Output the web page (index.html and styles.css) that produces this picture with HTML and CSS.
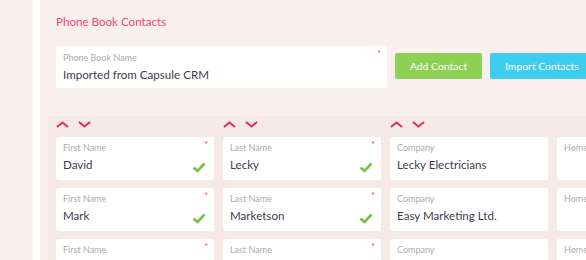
FILE: index.html
```html
<!DOCTYPE html>
<html>
<head>
<meta charset="utf-8">
<link rel="stylesheet" href="styles.css">
</head>
<body>
<div class="sidebar"></div>
<div class="divider"></div>
<main class="main">
  <h1 class="title">Phone Book Contacts</h1>
  <div class="top-row">
    <div class="field wide">
      <span class="label">Phone Book Name</span>
      <span class="value">Imported from Capsule CRM</span>
      <span class="req">*</span>
    </div>
    <button class="btn green">Add Contact</button>
    <button class="btn cyan">Import Contacts</button>
  </div>
  <section class="table">
    <div class="grid">
      <div class="sort"><svg width="13" height="7" viewBox="0 0 13 7"><path d="M1 6 L6.5 1.5 L12 6" fill="none" stroke="#e8294f" stroke-width="2"/></svg><svg width="13" height="7" viewBox="0 0 13 7"><path d="M1 1 L6.5 5.5 L12 1" fill="none" stroke="#e8294f" stroke-width="2"/></svg></div>
      <div class="sort"><svg width="13" height="7" viewBox="0 0 13 7"><path d="M1 6 L6.5 1.5 L12 6" fill="none" stroke="#e8294f" stroke-width="2"/></svg><svg width="13" height="7" viewBox="0 0 13 7"><path d="M1 1 L6.5 5.5 L12 1" fill="none" stroke="#e8294f" stroke-width="2"/></svg></div>
      <div class="sort"><svg width="13" height="7" viewBox="0 0 13 7"><path d="M1 6 L6.5 1.5 L12 6" fill="none" stroke="#e8294f" stroke-width="2"/></svg><svg width="13" height="7" viewBox="0 0 13 7"><path d="M1 1 L6.5 5.5 L12 1" fill="none" stroke="#e8294f" stroke-width="2"/></svg></div>
      <div class="sort"></div>

      <div class="field"><span class="label">First Name</span><span class="value">David</span><span class="req">*</span><svg class="check" width="14" height="11" viewBox="0 0 14 11"><path d="M1.5 5.5 L5.5 9 L12.5 1.5" fill="none" stroke="#76c143" stroke-width="2.6"/></svg></div>
      <div class="field"><span class="label">Last Name</span><span class="value">Lecky</span><span class="req">*</span><svg class="check" width="14" height="11" viewBox="0 0 14 11"><path d="M1.5 5.5 L5.5 9 L12.5 1.5" fill="none" stroke="#76c143" stroke-width="2.6"/></svg></div>
      <div class="field"><span class="label">Company</span><span class="value">Lecky Electricians</span></div>
      <div class="field"><span class="label">Home Phone</span><span class="value"></span></div>

      <div class="field"><span class="label">First Name</span><span class="value">Mark</span><span class="req">*</span><svg class="check" width="14" height="11" viewBox="0 0 14 11"><path d="M1.5 5.5 L5.5 9 L12.5 1.5" fill="none" stroke="#76c143" stroke-width="2.6"/></svg></div>
      <div class="field"><span class="label">Last Name</span><span class="value">Marketson</span><span class="req">*</span><svg class="check" width="14" height="11" viewBox="0 0 14 11"><path d="M1.5 5.5 L5.5 9 L12.5 1.5" fill="none" stroke="#76c143" stroke-width="2.6"/></svg></div>
      <div class="field"><span class="label">Company</span><span class="value">Easy Marketing Ltd.</span></div>
      <div class="field"><span class="label">Home Phone</span><span class="value"></span></div>

      <div class="field"><span class="label">First Name</span><span class="value"></span><span class="req">*</span></div>
      <div class="field"><span class="label">Last Name</span><span class="value"></span><span class="req">*</span></div>
      <div class="field"><span class="label">Company</span><span class="value"></span></div>
      <div class="field"><span class="label">Home Phone</span><span class="value"></span></div>
    </div>
  </section>
</main>
</body>
</html>
```
FILE: styles.css
```css
html, body {
  margin: 0;
  padding: 0;
  width: 586px;
  height: 260px;
  overflow: hidden;
}
body {
  display: flex;
  background: #f9efee;
  font-family: Lato, "Open Sans", sans-serif;
}
.sidebar {
  flex: 0 0 33px;
  background: #f9efee;
}
.divider {
  flex: 0 0 7px;
  background: #ffffff;
}
.main {
  flex: 1 0 auto;
  padding: 14px 0 0 16px;
  background: #f9efee;
}
.title {
  margin: 0;
  font-size: 11.6px;
  font-weight: 400;
  line-height: 16px;
  color: #f04a71;
}
.top-row {
  display: flex;
  align-items: flex-start;
  gap: 8px;
  margin-top: 16px;
}
.field {
  position: relative;
  box-sizing: border-box;
  background: #ffffff;
  border-radius: 3px;
  padding: 5px 7px 0;
  height: 43px;
  display: flex;
  flex-direction: column;
}
.field.wide {
  width: 331px;
  height: 42px;
  padding-top: 6px;
}
.label {
  font-size: 9px;
  line-height: 12px;
  color: #b3aaaa;
  white-space: nowrap;
}
.value {
  font-size: 11.6px;
  line-height: 16px;
  margin-top: 3px;
  color: #403c4d;
  white-space: nowrap;
}
.req {
  position: absolute;
  top: 3px;
  right: 6px;
  font-size: 9px;
  line-height: 9px;
  color: #ef3f66;
}
.check {
  position: absolute;
  right: 8px;
  top: 25px;
}
.btn {
  margin-top: 7px;
  height: 26px;
  border: none;
  border-radius: 2px;
  font-family: inherit;
  font-size: 10.4px;
  color: #ffffff;
  padding: 0 15px;
  white-space: nowrap;
  flex-shrink: 0;
}
.btn.green {
  width: 87px;
  padding: 0;
  background: #8dd154;
}
.btn.cyan {
  background: #3ccdef;
}
.table {
  margin: 28px 0 0 -8px;
  padding: 0 0 0 8px;
  background: #f6eae9;
  height: 200px;
}
.grid {
  display: grid;
  grid-template-columns: repeat(4, 158px);
  grid-template-rows: 13px;
  grid-auto-rows: 43px;
  column-gap: 9px;
  row-gap: 8px;
}
.grid .sort {
  display: flex;
  gap: 9px;
  align-items: flex-start;
  padding-top: 5px;
}
.sort svg {
  display: block;
}
```
